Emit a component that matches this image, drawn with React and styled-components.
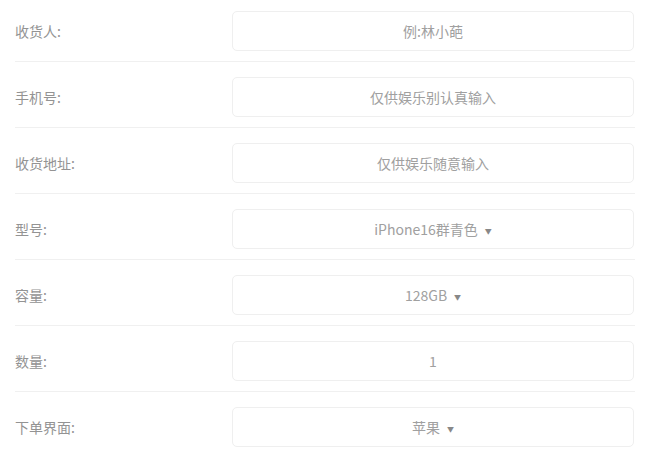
import React from "react";
import styled, { createGlobalStyle } from "styled-components";

const Global = createGlobalStyle`
  html, body { margin: 0; padding: 0; background: #fff; }
  body { font-family: "Noto Sans CJK SC", "Noto Sans", sans-serif; }
`;

const Form = styled.div`
  width: 620px;
  margin-left: 15px;
  display: flex;
  flex-direction: column;
`;

const Row = styled.div`
  display: flex;
  align-items: center;
  padding: 15px 0 10px;
  border-bottom: 1px solid ${(p) => (p.$last ? "transparent" : "#f0f0f0")};
  &:first-child { padding-top: 11px; }
`;

const Label = styled.div`
  width: 217px;
  font-size: 14px;
  color: #939393;
  line-height: 20px;
`;

const Field = styled.div`
  flex: 1;
  height: 40px;
  box-sizing: border-box;
  margin-right: 1px;
  border: 1px solid #efefef;
  border-radius: 5px;
  display: flex;
  align-items: center;
  justify-content: center;
  font-size: 14px;
  color: #a0a0a0;
`;

const Arrow = styled.span`
  font-size: 7px;
  color: #888;
  margin-left: 7px;
  margin-top: 3px;
`;

const rows = [
  { label: "收货人:", value: "例:林小葩" },
  { label: "手机号:", value: "仅供娱乐别认真输入" },
  { label: "收货地址:", value: "仅供娱乐随意输入" },
  { label: "型号:", value: "iPhone16群青色", select: true },
  { label: "容量:", value: "128GB", select: true },
  { label: "数量:", value: "1" },
  { label: "下单界面:", value: "苹果", select: true },
];

export default function App() {
  return (
    <>
      <Global />
      <Form>
        {rows.map((r, i) => (
          <Row key={r.label} $last={i === rows.length - 1}>
            <Label>{r.label}</Label>
            <Field>
              {r.value}
              {r.select && <Arrow>▼</Arrow>}
            </Field>
          </Row>
        ))}
      </Form>
    </>
  );
}
